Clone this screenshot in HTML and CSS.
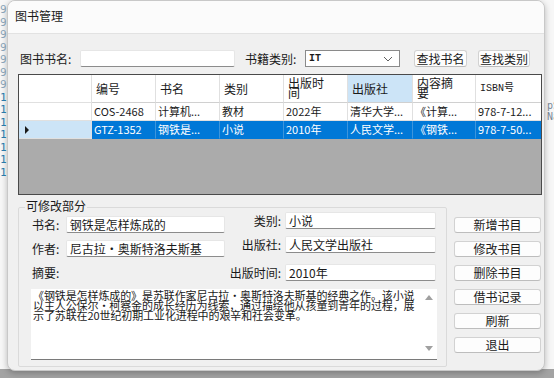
FILE: index.html
```html
<!DOCTYPE html>
<html lang="zh-CN">
<head>
    <meta charset="UTF-8">
    <title>图书管理</title>
    <link rel="stylesheet" href="styles.css">
</head>
<body>
    <div class="desktop">
        <!-- 后面的编辑器 -->
        <div class="gutter">
            <span>9</span><span>9</span><span>9</span><span>9</span><span>9</span><span>9</span>
            <span>9</span><span>10</span><span>10</span><span>10</span><span>10</span><span>10</span>
            <span>10</span><span>10</span>
        </div>
        <div class="code_peek">
            <span>pS</span>
            <span>Na</span>
        </div>
        <div class="taskbar"></div>

        <div class="window">
            <div class="titlebar">图书管理</div>
            <div class="content">
                <!-- 查找 -->
                <div class="search_row">
                    <label class="search_label">图书书名:</label>
                    <div class="textbox search_name"></div>
                    <label class="search_label type_label">书籍类别:</label>
                    <div class="combo">
                        <span>IT</span>
                        <svg width="10" height="6" viewBox="0 0 10 6"><path d="M1 1 L5 5 L9 1" fill="none" stroke="#606060" stroke-width="1"/></svg>
                    </div>
                    <button class="btn find_name">查找书名</button>
                    <button class="btn find_type">查找类别</button>
                </div>

                <!-- 表格 -->
                <div class="grid">
                    <div class="grid_row head">
                        <div class="rh"></div>
                        <div class="c c1">编号</div>
                        <div class="c c2">书名</div>
                        <div class="c c3">类别</div>
                        <div class="c c4 two">出版时<br>间</div>
                        <div class="c c5 sorted">出版社</div>
                        <div class="c c6 two">内容摘<br>要</div>
                        <div class="c c7 mono">ISBN号</div>
                    </div>
                    <div class="grid_row">
                        <div class="rh"></div>
                        <div class="c c1">COS-2468</div>
                        <div class="c c2">计算机...</div>
                        <div class="c c3">教材</div>
                        <div class="c c4">2022年</div>
                        <div class="c c5">清华大学...</div>
                        <div class="c c6">《计算...</div>
                        <div class="c c7">978-7-12...</div>
                    </div>
                    <div class="grid_row selected">
                        <div class="rh"><span class="arrow"></span></div>
                        <div class="c c1">GTZ-1352</div>
                        <div class="c c2">钢铁是...</div>
                        <div class="c c3">小说</div>
                        <div class="c c4">2010年</div>
                        <div class="c c5">人民文学...</div>
                        <div class="c c6">《钢铁...</div>
                        <div class="c c7">978-7-50...</div>
                    </div>
                </div>

                <!-- 下半部分 -->
                <div class="bottom">
                    <div class="group">
                        <div class="group_title">可修改部分</div>
                        <div class="fields">
                            <div class="col left">
                                <div class="field"><label>书名:</label><div class="textbox w160">钢铁是怎样炼成的</div></div>
                                <div class="field"><label>作者:</label><div class="textbox w160">尼古拉·奥斯特洛夫斯基</div></div>
                                <div class="field"><label>摘要:</label></div>
                            </div>
                            <div class="col right">
                                <div class="field"><label>类别:</label><div class="textbox w151">小说</div></div>
                                <div class="field"><label>出版社:</label><div class="textbox w151">人民文学出版社</div></div>
                                <div class="field f3"><label>出版时间:</label><div class="textbox w151">2010年</div></div>
                            </div>
                        </div>
                        <div class="memo">
                            <div class="memo_text">《钢铁是怎样炼成的》是苏联作家尼古拉·奥斯特洛夫斯基的经典之作。该小说以主人公保尔·柯察金的成长经历为线索，通过描绘他从孩童到青年的过程，展示了苏联在20世纪初期工业化进程中的艰辛和社会变革。</div>
                            <div class="scroll">
                                <svg width="8" height="5" viewBox="0 0 8 5"><path d="M0 5 L4 0 L8 5 Z" fill="#a0a0a0"/></svg>
                                <svg width="8" height="5" viewBox="0 0 8 5"><path d="M0 0 L4 5 L8 0 Z" fill="#a0a0a0"/></svg>
                            </div>
                        </div>
                    </div>
                    <div class="actions">
                        <button class="btn act">新增书目</button>
                        <button class="btn act">修改书目</button>
                        <button class="btn act">删除书目</button>
                        <button class="btn act">借书记录</button>
                        <button class="btn act">刷新</button>
                        <button class="btn act">退出</button>
                    </div>
                </div>
            </div>
        </div>
    </div>
</body>
</html>
```

FILE: styles.css
```css
*{
    padding: 0;
    margin: 0;
    box-sizing: border-box;
}
body{
    width: 554px;
    height: 378px;
    overflow: hidden;
    font-family: "Noto Sans CJK SC", "Noto Sans", sans-serif;
    font-size: 12px;
    color: #1a1a1a;
}
.desktop{
    position: relative;
    width: 554px;
    height: 378px;
    background-color: #f7f7f7;
}
.gutter{
    display: flex;
    flex-direction: column;
    padding-top: 4px;
    padding-left: 0;
    width: 10px;
    font-family: "DejaVu Sans Mono", monospace;
    font-size: 11px;
    line-height: 12.5px;
    color: #2b7fb0;
}
.gutter span:nth-child(-n+7){
    color: #8ea8bc;
}
.code_peek{
    position: absolute;
    left: 547px;
    top: 100px;
    display: flex;
    flex-direction: column;
    font-family: "DejaVu Sans Mono", monospace;
    font-size: 10px;
    line-height: 11px;
    color: #7a8a9a;
}
.taskbar{
    position: absolute;
    left: 0;
    bottom: 0;
    width: 100%;
    height: 9px;
    background-color: #a3a3a3;
}
.window{
    position: absolute;
    left: 7px;
    top: 0;
    width: 538px;
    height: 371px;
    background-color: #f0f0f0;
    border: 1px solid #c8c8c8;
    border-radius: 8px;
    box-shadow: 0 2px 6px rgba(0,0,0,0.25);
    overflow: hidden;
}
.titlebar{
    height: 33px;
    padding-left: 7px;
    padding-top: 6px;
    background-color: #fbfbfb;
    border-bottom: 1px solid #e2e2e2;
    font-size: 12px;
    color: #1a1a1a;
}
.content{
    padding: 16px 0 0 10px;
}
.search_row{
    display: flex;
    align-items: center;
    height: 17px;
}
.search_label{
    width: 60px;
    margin-left: 2px;
    font-size: 12px;
    line-height: 17px;
}
.type_label{
    margin-left: 10px;
}
.textbox{
    height: 17px;
    background-color: #fff;
    border: 1px solid #e6e6e6;
    border-bottom-color: #8c8c8c;
    border-radius: 2px;
    padding-left: 3px;
    font-size: 12px;
    line-height: 15px;
    white-space: nowrap;
    overflow: hidden;
}
.search_name{
    width: 155px;
}
.combo{
    display: flex;
    align-items: center;
    justify-content: space-between;
    width: 95px;
    height: 17px;
    padding: 0 6px 0 3px;
    background-color: #fff;
    border: 1px solid #8a8a8a;
    font-family: "Liberation Mono", monospace;
    font-size: 10px;
    font-weight: bold;
}
.btn{
    height: 17px;
    background-color: #fdfdfd;
    border: 1px solid #d2d2d2;
    border-bottom-color: #bdbdbd;
    border-radius: 3px;
    font-family: "Noto Sans CJK SC", sans-serif;
    font-size: 12px;
    line-height: 15px;
    color: #1a1a1a;
}
.find_name{
    width: 53px;
    margin-left: 14px;
}
.find_type{
    width: 52px;
    margin-left: 11px;
}
.grid{
    width: 524px;
    height: 121px;
    margin-top: 7px;
    background-color: #ababab;
    border: 1px solid #4a4a4a;
}
.grid_row{
    display: flex;
    height: 18px;
    background-color: #fff;
    font-size: 11px;
    line-height: 17px;
}
.grid_row.head{
    height: 28px;
    line-height: 27px;
    font-size: 12px;
}
.rh{
    display: flex;
    align-items: center;
    width: 73px;
    padding-left: 6px;
    background-color: #fff;
    border-right: 1px solid #e0e0e0;
    border-bottom: 1px solid #e0e0e0;
}
.c{
    padding-left: 2px;
    border-right: 1px solid #e0e0e0;
    border-bottom: 1px solid #e0e0e0;
    white-space: nowrap;
    overflow: hidden;
}
.head .c{
    padding-left: 4px;
    border-bottom-color: #d0d0d0;
}
.head .two{
    padding-top: 3px;
    line-height: 10px;
}
.head .mono{
    font-family: "Liberation Mono", monospace;
    font-size: 10px;
}
.head .sorted{
    background-color: #cce4f7;
}
.c1{ width: 64px; }
.c2{ width: 64px; }
.c3{ width: 64px; }
.c4{ width: 64px; }
.c5{ width: 65px; }
.c6{ width: 63px; }
.c7{ width: 65px; border-right: none; }
.selected .rh{
    background-color: #cce4f7;
}
.selected .c{
    background-color: #0078d7;
    color: #fff;
    border-right-color: #3d95dc;
    border-bottom-color: #0078d7;
}
.arrow{
    width: 0;
    height: 0;
    border-top: 4px solid transparent;
    border-bottom: 4px solid transparent;
    border-left: 4px solid #1a1a1a;
}
.bottom{
    display: flex;
    margin-top: 12px;
}
.group{
    position: relative;
    width: 429px;
    padding: 0 0 6px 13px;
    border: 1px solid #dadada;
    border-radius: 2px;
}
.group_title{
    position: absolute;
    left: 6px;
    top: -10px;
    padding: 0 1px;
    background-color: #f0f0f0;
    font-size: 12px;
    line-height: 16px;
}
.fields{
    display: flex;
}
.col{
    display: flex;
    flex-direction: column;
}
.col.left{
    width: 193px;
    padding-top: 8px;
    gap: 7px;
}
.col.right{
    padding-top: 4px;
    gap: 7px;
}
.field{
    display: flex;
    align-items: center;
    height: 17px;
}
.field label{
    white-space: nowrap;
}
.col.right .f3{
    margin-top: 4px;
}
.col.left label{
    width: 34px;
}
.col.right label{
    width: 60px;
    text-align: right;
    padding-right: 4px;
}
.w160{
    width: 160px;
}
.w151{
    width: 151px;
}
.memo{
    display: flex;
    width: 406px;
    height: 71px;
    margin-top: 8px;
    margin-left: -1px;
    background-color: #fff;
    border-bottom: 1px solid #7a7a7a;
}
.memo_text{
    width: 390px;
    padding: 1px 0 0 2px;
    font-size: 11px;
    line-height: 10px;
    letter-spacing: -0.1px;
}
.scroll{
    display: flex;
    flex-direction: column;
    justify-content: space-between;
    align-items: center;
    width: 16px;
    padding: 6px 0 8px;
}
.actions{
    display: flex;
    flex-direction: column;
    gap: 8px;
    margin-left: 7px;
    padding-top: 10px;
}
.act{
    width: 87px;
    height: 16px;
    line-height: 14px;
}
```
